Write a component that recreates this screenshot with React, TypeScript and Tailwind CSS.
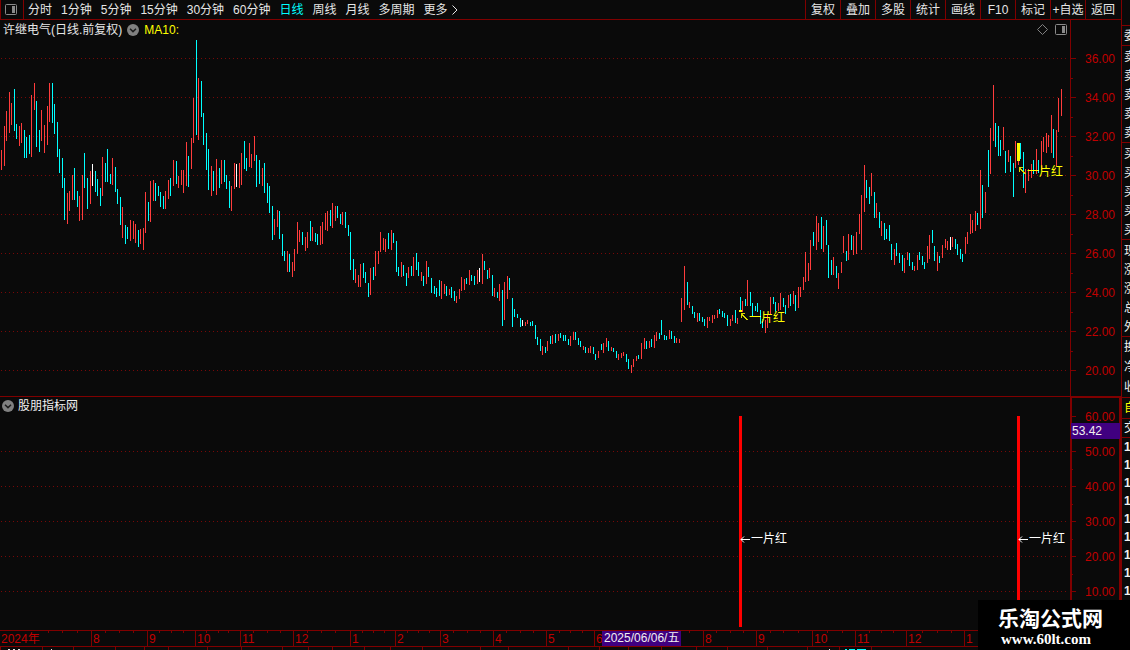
import React from "react";

type Bar = { x: number; top: number; bottom: number; color: string };

// Daily ranges: x, top, bottom, direction (r = up, c = down, w = flat)
const SERIES = `
1 150 170 r,4 126 166 r,6 111 141 r,9 92 133 r,11 103 125 r,14 89 131 c,16 124 139 c,19 126 146 r,21 123 143 r,24 130 158 c,26 137 158 c,29 135 154 c,
31 95 157 r,34 83 110 r,36 101 147 c,39 130 152 c,41 110 141 r,44 125 153 r,47 106 145 r,49 83 122 r,52 83 123 c,54 104 134 c,57 122 157 c,59 149 173 c,
62 158 188 c,64 178 220 c,67 193 224 r,69 191 211 r,72 175 200 r,74 168 200 c,77 191 207 c,79 196 221 r,82 175 220 r,84 153 188 c,87 178 209 c,90 171 204 r,
92 164 186 w,95 171 192 c,97 179 196 c,100 188 206 c,102 157 196 r,105 163 182 c,107 149 182 c,110 174 184 c,112 158 185 r,115 167 192 c,117 189 204 c,
120 197 225 c,122 207 238 r,125 225 244 c,127 227 239 c,130 220 241 r,133 221 239 r,135 224 243 r,138 230 247 c,140 229 244 r,143 228 250 r,145 192 233 r,
148 202 221 c,150 181 222 r,153 180 201 r,155 183 201 c,158 186 196 c,160 192 207 c,163 196 209 c,165 191 209 r,168 180 199 r,170 178 196 c,173 160 186 r,
176 161 184 c,178 176 188 r,181 170 185 r,183 170 193 r,186 142 186 r,188 156 187 c,191 138 169 r,193 98 143 r,196 40 135 c,198 78 140 r,201 81 117 c,
203 113 145 c,206 133 170 c,208 149 190 c,211 166 196 r,213 171 191 c,216 159 195 r,219 168 188 c,221 160 184 r,224 160 182 c,226 175 189 c,229 181 208 c,
231 186 211 r,234 163 189 r,236 164 187 w,239 163 188 r,241 153 185 r,244 141 169 c,246 158 171 c,249 143 167 r,251 154 168 r,254 136 161 r,256 155 187 c,
259 160 184 c,262 168 186 r,264 163 193 c,267 183 203 c,269 186 213 c,272 206 240 c,274 219 235 r,277 210 227 r,279 211 239 c,282 234 256 c,284 251 261 c,
287 251 272 r,289 254 272 c,292 262 277 r,294 249 271 r,297 222 254 r,299 230 242 r,302 232 245 c,305 237 251 r,307 232 248 r,310 221 241 c,312 227 241 r,
315 233 242 c,317 234 245 c,320 226 245 r,322 222 244 r,325 213 230 r,327 211 231 r,330 210 226 c,332 203 228 r,335 206 221 r,337 206 218 c,340 214 224 c,
342 212 225 r,345 212 228 c,348 225 236 c,350 232 270 c,353 259 280 c,355 269 283 r,358 275 287 r,360 264 287 r,363 263 278 c,365 272 283 c,368 283 297 c,
370 268 295 r,373 267 280 c,375 251 276 r,378 251 264 r,380 232 252 r,383 238 250 r,385 239 252 r,388 233 249 c,391 230 250 r,393 233 243 c,396 241 272 c,
398 267 276 c,401 262 277 r,403 265 276 c,406 273 286 c,408 267 278 r,411 266 276 c,413 257 276 r,416 253 270 c,418 262 276 c,421 272 281 r,423 276 286 c,
426 261 284 r,428 267 277 c,431 278 293 c,434 286 294 c,436 288 297 c,439 280 296 c,441 281 299 r,444 284 294 r,446 286 296 c,449 289 295 r,451 287 298 c,
454 291 301 c,456 296 303 r,459 289 299 r,461 277 291 r,464 279 290 r,466 278 284 c,469 270 285 r,471 275 281 c,474 276 285 c,477 270 284 r,479 268 282 w,
482 254 284 r,484 261 270 c,487 270 279 c,489 268 278 r,492 275 296 c,494 288 297 r,497 292 298 c,499 284 301 r,502 290 326 c,504 282 320 r,507 276 299 r,
509 278 290 c,512 298 327 c,514 309 317 c,517 314 318 c,520 318 327 c,522 320 326 w,525 322 326 r,527 320 324 r,530 322 326 c,532 321 326 c,535 325 339 c,
537 337 345 c,540 339 351 c,542 346 355 r,545 347 353 c,547 341 351 r,550 336 344 c,552 335 344 r,555 334 343 c,558 334 341 r,560 333 338 c,563 335 341 c,
565 335 341 c,568 339 345 c,570 336 346 r,573 332 340 r,575 332 340 c,578 338 345 c,580 341 347 c,583 346 350 r,585 347 353 c,588 348 353 r,590 346 353 r,
593 347 354 c,595 354 360 c,598 351 358 r,601 344 350 c,603 343 353 r,606 338 347 r,608 341 351 c,611 347 351 r,613 348 352 c,616 351 358 c,618 354 360 r,
621 353 358 r,623 352 356 r,626 354 362 c,628 359 369 c,631 365 373 r,633 359 367 r,636 356 361 r,638 355 359 c,641 343 359 r,644 338 349 r,646 341 349 c,
649 341 348 r,651 339 347 c,654 335 348 r,656 332 341 r,659 333 339 c,661 320 335 c,664 335 340 c,666 336 340 c,669 330 339 r,671 331 339 c,674 336 343 c,
676 338 343 r,679 339 343 r,681 298 322 r,684 266 310 r,687 282 305 c,689 302 308 r,692 306 314 c,694 312 318 c,697 313 322 r,699 313 321 c,702 317 322 c,
704 319 326 c,707 317 328 r,709 317 321 r,712 315 323 r,714 315 319 r,717 310 318 r,719 309 314 c,722 311 317 c,724 313 318 c,727 315 326 c,730 319 326 r,
732 315 321 r,735 310 323 c,737 318 324 r,740 297 311 c,742 301 312 r,745 299 306 c,747 280 306 r,750 292 306 c,752 303 317 c,755 306 311 c,757 303 312 c,
760 310 324 c,762 319 328 c,765 320 333 r,767 315 328 r,770 297 314 r,773 297 304 c,775 302 312 c,778 303 311 r,780 293 310 r,783 298 307 c,785 305 314 c,
788 295 308 r,790 294 306 c,793 291 304 r,795 295 311 c,798 287 308 r,800 287 297 r,803 277 290 r,805 252 282 r,808 263 281 r,810 240 270 r,813 232 246 c,
816 216 250 r,818 223 242 r,821 217 249 c,823 226 252 r,826 220 245 c,828 245 278 c,831 260 275 c,833 257 275 r,836 266 278 c,838 273 289 r,841 262 273 r,
843 236 253 r,846 251 261 c,848 234 260 r,851 235 250 c,853 236 255 r,856 232 254 r,859 214 234 r,861 195 250 r,864 165 212 r,866 180 198 c,869 187 204 c,
871 173 196 r,874 192 218 c,876 203 218 r,879 212 228 c,881 221 236 r,884 223 240 c,886 229 239 c,889 225 241 c,891 244 260 c,894 249 265 r,896 243 256 c,
899 253 263 c,902 255 271 c,904 258 273 r,907 252 260 r,909 253 266 c,912 262 270 c,914 266 271 r,917 255 270 r,919 252 260 c,922 256 265 c,924 262 269 c,
927 246 263 r,929 235 259 r,932 230 243 c,934 246 261 c,937 252 271 r,939 256 263 c,942 245 258 r,945 239 248 r,947 241 250 r,950 237 250 w,952 237 247 r,
955 239 249 c,957 244 255 c,960 249 259 c,962 254 262 c,965 237 254 r,967 232 244 r,970 214 234 r,972 220 233 r,975 211 231 r,977 213 225 c,980 170 229 r,
982 185 218 c,985 192 213 r,988 150 187 c,990 128 174 r,993 85 141 r,995 123 147 c,998 126 156 c,1000 140 156 c,1003 127 150 r,1005 151 173 c,1008 150 162 r,
1010 156 172 c,1013 163 197 c,1015 141 168 r,1018 143 165 r,1020 143 159 c,1023 152 188 c,1025 169 193 r,1028 169 181 r,1031 164 178 r,1033 160 174 c,
1036 149 174 r,1038 160 173 c,1041 141 170 r,1043 137 152 r,1046 133 153 r,1048 135 147 r,1051 115 153 r,1053 129 158 c,1056 130 166 r,1058 98 132 r,1061 89 116 r`;

const COLORS: Record<string, string> = { r: "#ff3c3c", c: "#00ffff", w: "#ffffff" };

const bars: Bar[] = SERIES.split(",").map((item) => {
  const [x, top, bottom, dir] = item.trim().split(" ");
  return { x: Number(x), top: Number(top), bottom: Number(bottom), color: COLORS[dir] };
});

const periods = ["分时", "1分钟", "5分钟", "15分钟", "30分钟", "60分钟", "日线", "周线", "月线", "多周期"];
const tools = ["复权", "叠加", "多股", "统计", "画线", "F10", "标记", "+自选", "返回"];
const prices = [36, 34, 32, 30, 28, 26, 24, 22, 20];
const levels = [60, 50, 40, 30, 20, 10];

const months: [number, string][] = [
  [91, "8"], [147, "9"], [195, "10"], [240, "11"], [293, "12"], [350, "1"], [395, "2"], [440, "3"],
  [493, "4"], [546, "5"], [594, "6"], [703, "8"], [756, "9"], [812, "10"], [855, "11"], [906, "12"], [964, "1"],
];
const weekTicks = [
  48, 62, 77, 105, 119, 133, 159, 171, 183, 206, 218, 228, 253, 267, 280, 307, 321, 335, 362, 373, 384, 407, 418, 429,
  453, 467, 480, 506, 520, 533, 559, 570, 582, 689, 716, 730, 743, 770, 783, 798, 827, 842, 869, 881, 893, 922, 937, 951,
];
const footerTicks = [
  0, 42, 73, 115, 144, 168, 207, 241, 282, 308, 332, 364, 390, 422, 480, 508, 568, 599, 628, 661, 696, 727, 767, 807,
  839, 871,
];

const quoteGroups: { labels: string[]; style: string }[] = [
  { labels: [], style: "h-[26px]" },
  { labels: ["委"], style: "h-5" },
  { labels: ["卖", "卖", "卖", "卖", "卖"], style: "h-[97px] pt-[2px]" },
  { labels: ["买", "买", "买", "买", "买"], style: "h-[97px] pt-[2px]" },
  { labels: ["现", "涨", "涨", "总", "外"], style: "h-[97px] pt-[2px]" },
  { labels: ["换", "净", "收"], style: "h-[61px]" },
  { labels: ["自"], style: "h-[21px] text-[#ffff00]" },
  { labels: ["交"], style: "h-[19px]" },
];

function GridLine({ y }: { y: number }) {
  return <line x1="1" x2="1067" y1={y + 0.5} y2={y + 0.5} stroke="#780808" strokeDasharray="1 3" />;
}

function CollapseButton({ label }: { label: string }) {
  return (
    <button type="button" aria-label={label} className="h-3 w-3 shrink-0">
      <svg viewBox="0 0 12 12" className="block h-3 w-3">
        <circle cx="6" cy="6" r="6" fill="#808080" />
        <path d="M3 4.8 L6 7.6 L9 4.8" fill="none" stroke="#1c1c1c" strokeWidth="1.5" />
      </svg>
    </button>
  );
}

function PanelIcon() {
  return (
    <svg viewBox="0 0 12 11" className="block h-[11px] w-3">
      <rect x="0.5" y="0.5" width="11" height="10" rx="1" fill="none" stroke="#8a8a8a" />
      <rect x="7" y="2" width="3" height="7" fill="#8a8a8a" />
    </svg>
  );
}

function Toolbar() {
  return (
    <header className="flex h-5 items-stretch justify-between border-b border-[#800000] text-[#e6e6e6]">
      <nav className="flex items-center whitespace-nowrap">
        <button
          type="button"
          aria-label="侧栏"
          className="flex h-full w-6 items-center border-x border-[#800000] pl-1"
        >
          <PanelIcon />
        </button>
        <div className="flex items-center gap-[9px] pl-1">
          {periods.map((p) => (
            <button key={p} type="button" className={p === "日线" ? "text-[#00ffff]" : ""}>
              {p}
            </button>
          ))}
          <button type="button" className="flex items-center gap-1">
            更多
            <svg viewBox="0 0 6 10" className="h-[10px] w-[6px]">
              <path d="M0.5 0.5 L5 5 L0.5 9.5" fill="none" stroke="#e6e6e6" />
            </svg>
          </button>
        </div>
      </nav>
      <div className="flex whitespace-nowrap pr-px">
        {tools.map((t) => (
          <button key={t} type="button" className="flex w-[35px] items-center justify-center border-l border-[#800000]">
            {t}
          </button>
        ))}
      </div>
    </header>
  );
}

function Signal({ x, y }: { x: number; y: number }) {
  return (
    <g>
      <path
        d={`M${x} ${y - 3.5} h4 M${x + 0.5} ${y - 3} v4 M${x + 0.5} ${y - 3} l6 6`}
        stroke="#d8d800"
        fill="none"
        shapeRendering="crispEdges"
      />
      <text x={x + 8} y={y + 5} fill="#ffff00">
        一片红
      </text>
    </g>
  );
}

function PriceChart() {
  return (
    <svg viewBox="0 38 1121 358" className="block h-auto w-full text-[12px]">
      <g shapeRendering="crispEdges">
        {prices.map((p, i) => (
          <GridLine key={p} y={58 + i * 39} />
        ))}
        {bars.map((b) => (
          <rect key={b.x} x={b.x} y={b.top} width="1" height={b.bottom - b.top} fill={b.color} />
        ))}
        <rect x="1017" y="143" width="3" height="18" fill="#ffff00" />
        <rect x="739" y="310" width="3" height="2" fill="#ffff00" />
        <rect x="1070" y="38" width="1" height="358" fill="#800000" />
        {prices.map((p, i) => (
          <g key={p} fill="#800000">
            <rect x="1071" y={58 + i * 39} width="5" height="1" />
            {i < 8 && <rect x="1071" y={78 + i * 39} width="2" height="1" />}
          </g>
        ))}
      </g>
      {prices.map((p, i) => (
        <text key={p} x="1115" y={63 + i * 39} textAnchor="end" fill="#c00000">
          {p.toFixed(2)}
        </text>
      ))}
      <Signal x={741} y={317} />
      <Signal x={1019} y={171} />
    </svg>
  );
}

function IndicatorChart() {
  return (
    <svg viewBox="0 415 1121 215" className="block h-auto w-full overflow-visible text-[12px]">
      <g shapeRendering="crispEdges">
        {levels.slice(1).map((v, i) => (
          <GridLine key={v} y={451 + i * 35} />
        ))}
        <rect x="739" y="416" width="3" height="211" fill="#ff0000" />
        <rect x="1017" y="416" width="3" height="211" fill="#ff0000" />
        <rect x="1070" y="415" width="2" height="215" fill="#800000" />
        <rect x="1119" y="415" width="2" height="215" fill="#800000" />
        {levels.map((v, i) => (
          <g key={v} fill="#800000">
            <rect x="1072" y={416 + i * 35} width="4" height="1" />
            <rect x="1072" y={434 + i * 35} width="1" height="1" />
          </g>
        ))}
      </g>
      {levels.map((v, i) => (
        <text key={v} x="1115" y={421 + i * 35} textAnchor="end" fill="#c00000">
          {v.toFixed(2)}
        </text>
      ))}
      <rect x="1071" y="423" width="49" height="16" fill="#400080" />
      <text x="1072" y="435" fill="#f0f0f0">
        53.42
      </text>
      {[741, 1019].map((x) => (
        <g key={x}>
          <path d={`M${x} 539.5 h9 M${x + 3} 536.5 l-3 3 l3 3`} fill="none" stroke="#ffffff" />
          <text x={x + 10} y="543" fill="#ffffff">
            一片红
          </text>
        </g>
      ))}
    </svg>
  );
}

function TimeAxis() {
  return (
    <svg viewBox="0 630 1121 20" className="block h-auto w-full text-[12px]">
      <g shapeRendering="crispEdges" fill="#800000">
        <rect x="0" y="630" width="1121" height="1" />
        <rect x="0" y="646" width="1121" height="1" />
        {months.map(([x]) => (
          <rect key={x} x={x} y="631" width="1" height="15" />
        ))}
        {weekTicks.map((x) => (
          <rect key={x} x={x} y="631" width="1" height="2" />
        ))}
        {footerTicks.map((x) => (
          <rect key={x} x={x} y="647" width="1" height="3" />
        ))}
        <path d="M8 649h2v1h-2z M13 649h2v1h-2z M18 649h2v1h-2z M51 649h1v1h-1z M829 649h1v1h-1z" fill="#e6e6e6" />
        <path d="M845 649h2v1h-2z M849 649h6v1h-6z M857 649h9v1h-9z" fill="#00ffff" />
      </g>
      <text x="1" y="643" fill="#c00000">
        2024年
      </text>
      {months.map(([x, label]) => (
        <text key={x} x={x + 2} y="643" fill="#c00000">
          {label}
        </text>
      ))}
      <rect x="602" y="631" width="79" height="15" fill="#400080" />
      <text x="604" y="642" fill="#f0f0f0">
        2025/06/06/五
      </text>
    </svg>
  );
}

function QuoteStrip() {
  return (
    <aside className="w-[9px] shrink-0 overflow-hidden border-l border-[#800000] text-[#f0f0f0]">
      {quoteGroups.map((g, i) => (
        <div key={i} className={`flex flex-col justify-around border-b border-[#800000] pl-[2px] leading-4 ${g.style}`}>
          {g.labels.map((label, j) => (
            <span key={j} className="w-3">
              {label}
            </span>
          ))}
        </div>
      ))}
      {Array.from({ length: 9 }, (_, i) => (
        <div key={i} className="h-[18px] pl-[2px] font-bold leading-[18px]">
          1
        </div>
      ))}
    </aside>
  );
}

export default function App() {
  return (
    <div className="relative flex min-h-screen overflow-hidden bg-[#0a0a0a] font-['Liberation_Sans','Noto_Sans_CJK_SC',sans-serif] text-[12px] leading-4">
      <main className="min-w-0 flex-1">
        <Toolbar />
        <section>
          <div className="flex h-[18px] text-[#e6e6e6]">
            <div className="flex flex-1 items-center gap-[5px] pl-[3px] pt-px">
              <h1>许继电气(日线.前复权)</h1>
              <CollapseButton label="主图设置" />
              <span className="text-[#ffff00]">MA10:</span>
            </div>
            <div className="flex items-center gap-[7px] pr-[3px]">
              <button type="button" aria-label="标记点">
                <svg viewBox="0 0 11 11" className="block h-[11px] w-[11px]">
                  <path d="M5.5 0.5 L10.5 5.5 L5.5 10.5 L0.5 5.5 Z" fill="none" stroke="#808080" />
                </svg>
              </button>
              <button type="button" aria-label="面板">
                <PanelIcon />
              </button>
            </div>
            <div className="w-[51px] border-l border-[#800000]" />
          </div>
          <PriceChart />
        </section>
        <section className="border-t border-[#800000]">
          <div className="flex h-[18px] text-[#f0f0f0]">
            <div className="flex flex-1 items-center gap-1 pl-[2px]">
              <CollapseButton label="副图设置" />
              <h2>股朋指标网</h2>
            </div>
            <div className="w-[51px] border-x-2 border-t border-[#800000]" />
          </div>
          <IndicatorChart />
        </section>
        <TimeAxis />
      </main>
      <QuoteStrip />
      <div className="absolute bottom-0 right-0 flex h-[50px] w-[152px] flex-col bg-black pl-5 pt-2 text-white">
        <span className="text-[21px] font-bold leading-[22px]">乐淘公式网</span>
        <span className="pl-[3px] font-['Liberation_Serif',serif] text-[15px] font-bold leading-[18px]">
          www.60lt.com
        </span>
      </div>
    </div>
  );
}
